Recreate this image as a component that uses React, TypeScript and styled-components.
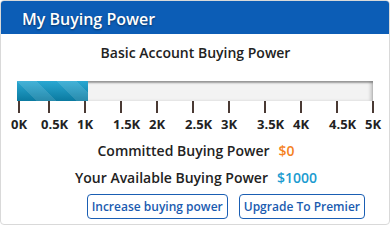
import React from "react";
import styled, { createGlobalStyle } from "styled-components";

const Global = createGlobalStyle`
  html, body { margin: 0; padding: 0; background: #ffffff; }
  body { font-family: "Open Sans", "Liberation Sans", sans-serif; }
  * { box-sizing: border-box; }
`;

const Card = styled.div`
  width: 390px;
  height: 225px;
  border: 1px solid #d9d9d9;
  border-radius: 4px;
  overflow: hidden;
  background: #fff;
  display: flex;
  flex-direction: column;
`;

const Header = styled.div`
  height: 33px;
  background: #0c5db6;
  color: #fff;
  font-size: 16px;
  font-weight: 600;
  padding: 2px 0 0 21px;
  display: flex;
  align-items: center;
  text-shadow: 0 1px 2px rgba(0, 0, 0, 0.45);
`;

const Title = styled.div`
  margin-top: 9px;
  text-align: center;
  font-size: 14px;
  font-weight: 600;
  line-height: 20px;
  color: #222;
  padding-left: 1px;
`;

const Track = styled.div`
  margin: 18px 16px 0 16px;
  height: 20px;
  background: #f3f3f3;
  box-shadow: inset 0 2px 2px rgba(0, 0, 0, 0.35), inset -3px 0 3px rgba(0, 0, 0, 0.15);
  display: flex;
`;

const Fill = styled.div`
  height: 100%;
  background-image:
    linear-gradient(45deg, rgba(255,255,255,0.12) 25%, transparent 25%, transparent 50%, rgba(255,255,255,0.12) 50%, rgba(255,255,255,0.12) 75%, transparent 75%, transparent),
    linear-gradient(to bottom, #2aa8d2, #0b7aa0);
  background-size: 40px 40px, 100% 100%;
`;

const Scale = styled.div`
  display: flex;
  padding-left: 17px;
`;

const Mark = styled.div<{ $w: number }>`
  width: ${(p) => p.$w}px;
  flex: none;
  display: flex;
  flex-direction: column;
  align-items: flex-start;
`;

const Tick = styled.div`
  width: 2px;
  height: 12px;
  background: #4a3a34;
`;

const TickLabel = styled.div`
  margin-left: -7px;
  margin-top: 2px;
  font-size: 13px;
  font-weight: 700;
  line-height: 18px;
  color: #222;
  white-space: nowrap;
`;

const Stat = styled.div<{ $top: number }>`
  display: flex;
  justify-content: center;
  gap: 9px;
  margin-top: ${(p) => p.$top}px;
  font-size: 14px;
  font-weight: 600;
  line-height: 20px;
  color: #222;
  padding-left: 2px;
`;

const Value = styled.span<{ $color: string }>`
  color: ${(p) => p.$color};
`;

const Buttons = styled.div`
  display: flex;
  justify-content: flex-end;
  gap: 11px;
  padding-right: 24px;
  margin-top: 6px;
`;

const Btn = styled.button`
  height: 25px;
  padding: 0 4px;
  border: 1px solid #1a5eb3;
  border-radius: 4px;
  background: #fff;
  color: #1a5bb0;
  font-family: "Open Sans", "Liberation Sans", sans-serif;
  font-size: 12px;
  font-weight: 600;
  line-height: 20px;
  cursor: pointer;
`;

const ticks = ["0K", "0.5K", "1K", "1.5K", "2K", "2.5K", "3K", "3.5K", "4K", "4.5K", "5K"];

export default function App() {
  const used = 1000;
  const max = 5000;
  return (
    <>
      <Global />
      <Card>
        <Header>My Buying Power</Header>
        <Title>Basic Account Buying Power</Title>
        <Track>
          <Fill style={{ width: `${(used / max) * 100}%` }} />
        </Track>
        <Scale>
          {ticks.map((t, i) => (
            <Mark key={t} $w={i === 0 ? 30 : i === ticks.length - 1 ? 20 : 36}>
              <Tick />
              <TickLabel>{t}</TickLabel>
            </Mark>
          ))}
        </Scale>
        <Stat $top={8}>
          <span>Committed Buying Power</span>
          <Value $color="#f5821f">$0</Value>
        </Stat>
        <Stat $top={7}>
          <span>Your Available Buying Power</span>
          <Value $color="#1b9bd0">$1000</Value>
        </Stat>
        <Buttons>
          <Btn>Increase buying power</Btn>
          <Btn>Upgrade To Premier</Btn>
        </Buttons>
      </Card>
    </>
  );
}
